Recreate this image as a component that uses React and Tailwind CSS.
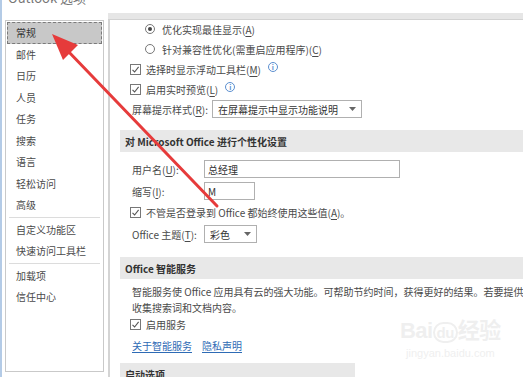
const navTop = ['常规', '邮件', '日历', '人员', '任务', '搜索', '语言', '轻松访问', '高级'];
const navMid = ['自定义功能区', '快速访问工具栏'];
const navEnd = ['加载项', '信任中心'];

const Radio = ({ on }) => (
  <span className="flex h-[10px] w-[10px] shrink-0 items-center justify-center rounded-full border border-[#777] bg-white">
    {on ? <span className="h-[4px] w-[4px] rounded-full bg-[#444]" /> : null}
  </span>
);

const Check = () => (
  <span className="flex h-[11px] w-[11px] shrink-0 items-center justify-center border border-[#777] bg-white">
    <svg width="9" height="9" viewBox="0 0 9 9">
      <path d="M1.5 4.8 L3.6 7 L7.6 1.8" fill="none" stroke="#555" strokeWidth="1.1" />
    </svg>
  </span>
);

const Info = () => (
  <span className="ml-[2px] -mt-[4px] flex h-[10px] w-[10px] shrink-0 items-center justify-center rounded-full border border-[#5b8fd0] text-[7px] leading-none font-bold text-[#5b8fd0]">
    i
  </span>
);

const Caret = () => (
  <svg width="7" height="4" viewBox="0 0 7 4" className="shrink-0">
    <path d="M0 0 L7 0 L3.5 4 Z" fill="#666" />
  </svg>
);

const U = ({ children }) => <span className="underline underline-offset-2">{children}</span>;

const NavItem = ({ label, active }) => (
  <div
    className={
      active
        ? 'mx-[1px] flex h-[21.5px] items-center border border-dashed border-[#7a7a7a] bg-[#c8c8c8] pl-[8px] whitespace-nowrap text-[#333]'
        : 'mx-[1px] flex h-[21.5px] items-center pl-[9px] whitespace-nowrap'
    }
  >
    {label}
  </div>
);

const Section = ({ title, className = '' }) => (
  <div className={`flex h-[22px] shrink-0 items-center bg-[#e8e8e8] pl-[5px] font-bold whitespace-nowrap text-[#333] ${className}`}>
    {title}
  </div>
);

export default function App() {
  return (
    <div
      className="relative h-[377px] w-[523px] overflow-hidden border-l-2 border-[#b4cbe6] bg-white text-[10px] text-[#4a4a4a]"
      style={{ fontFamily: '"Noto Sans CJK SC", "Noto Sans", sans-serif' }}
    >
      <div className="h-[13px] overflow-hidden pl-[6px]">
        <div className="-mt-[11px] text-[13px] leading-[18px] text-[#777]">Outlook 选项</div>
      </div>

      <div className="flex">
        <nav className="mt-[7px] ml-[3px] flex h-[352px] w-[99px] shrink-0 flex-col border border-[#c9c9c9] pt-[1px]">
          {navTop.map((n, i) => (
            <NavItem key={n} label={n} active={i === 0} />
          ))}
          <div className="mx-[3px] my-[1px] border-t border-[#dcdcdc]" />
          {navMid.map((n) => (
            <NavItem key={n} label={n} />
          ))}
          <div className="mx-[3px] my-[1px] border-t border-[#dcdcdc]" />
          {navEnd.map((n) => (
            <NavItem key={n} label={n} />
          ))}
        </nav>

        <main className="ml-[4px] flex min-w-0 flex-1 flex-col overflow-hidden whitespace-nowrap">
          <div className="h-[7px] border-b border-[#d2d2d2] bg-[#e6e6e6]" />
          <div className="flex flex-1 flex-col border-l-2 border-[#d4d4d4] pl-[10px]">
            <div className="mt-[-1px] flex h-[20px] items-center gap-[7px] pl-[25px]">
              <Radio on />
              <span>优化实现最佳显示(<U>A</U>)</span>
            </div>
            <div className="flex h-[20px] items-center gap-[7px] pl-[25px]">
              <Radio />
              <span>针对兼容性优化(需重启应用程序)(<U>C</U>)</span>
            </div>
            <div className="flex h-[20px] items-center gap-[5px] pl-[10px]">
              <Check />
              <span>选择时显示浮动工具栏(<U>M</U>)</span>
              <Info />
            </div>
            <div className="flex h-[20px] items-center gap-[5px] pl-[10px]">
              <Check />
              <span>启用实时预览(<U>L</U>)</span>
              <Info />
            </div>
            <div className="flex h-[20px] items-center pl-[12px]">
              <span className="w-[80px] shrink-0">屏幕提示样式(<U>R</U>):</span>
              <div className="flex h-[18px] w-[150px] shrink-0 items-center justify-between border border-[#b0b0b0] pr-[5px] pl-[5px] text-[#333]">
                <span>在屏幕提示中显示功能说明</span>
                <Caret />
              </div>
            </div>

            <Section title="对 Microsoft Office 进行个性化设置" className="mt-[11px]" />

            <div className="mt-[7px] flex h-[20px] items-center pl-[12px]">
              <span className="w-[72px] shrink-0">用户名(<U>U</U>):</span>
              <div className="flex h-[18px] w-[196px] shrink-0 items-center border border-[#b0b0b0] pl-[3px] text-[#333]">总经理</div>
            </div>
            <div className="mt-[2px] flex h-[20px] items-center pl-[12px]">
              <span className="w-[72px] shrink-0">缩写(<U>I</U>):</span>
              <div className="flex h-[18px] w-[51px] shrink-0 items-center border border-[#b0b0b0] pl-[3px] text-[#333]">M</div>
            </div>
            <div className="mt-[1px] flex h-[20px] items-center gap-[5px] pl-[10px]">
              <Check />
              <span>不管是否登录到 Office 都始终使用这些值(<U>A</U>)。</span>
            </div>
            <div className="mt-[2px] flex h-[20px] items-center pl-[12px]">
              <span className="w-[72px] shrink-0">Office 主题(<U>T</U>):</span>
              <div className="flex h-[18px] w-[53px] shrink-0 items-center justify-between border border-[#b0b0b0] pr-[5px] pl-[5px] text-[#333]">
                <span>彩色</span>
                <Caret />
              </div>
            </div>

            <Section title="Office 智能服务" className="mt-[13px]" />

            <div className="mt-[5px] pl-[12px] leading-[16px]">
              <div>智能服务使 Office 应用具有云的强大功能。可帮助节约时间，获得更好的结果。若要提供这些服务，Microsoft 需要能够</div>
              <div>收集搜索词和文档内容。</div>
            </div>
            <div className="flex h-[16px] items-center gap-[5px] pl-[10px]">
              <Check />
              <span>启用服务</span>
            </div>
            <div className="mt-[3px] flex h-[20px] items-center gap-[10px] pl-[12px] text-[#2e6bb5]">
              <span className="underline underline-offset-2">关于智能服务</span>
              <span className="underline underline-offset-2">隐私声明</span>
            </div>

            <Section title="启动选项" className="mt-[8px] w-[235px]" />
          </div>
        </main>
      </div>

      <div className="pointer-events-none absolute top-[318px] left-[398px] flex flex-col items-center text-[#efefef]">
        <div className="text-[22px] leading-[26px] font-bold tracking-tight" style={{ fontFamily: '"Liberation Sans", "Noto Sans CJK SC", sans-serif' }}>
          Bai<span className="rounded-full border-2 border-[#efefef] px-[2px] text-[15px]">du</span>经验
        </div>
        <div className="text-[11px] leading-[14px]" style={{ fontFamily: '"Liberation Sans", sans-serif' }}>
          jingyan.baidu.com
        </div>
      </div>

      <svg className="pointer-events-none absolute inset-0" width="523" height="377">
        <line x1="64" y1="49" x2="215" y2="206" stroke="#e63b3b" strokeWidth="3" strokeLinecap="round" />
        <polygon points="50,34 76,45 61,60" fill="#e63b3b" />
      </svg>
    </div>
  );
}
